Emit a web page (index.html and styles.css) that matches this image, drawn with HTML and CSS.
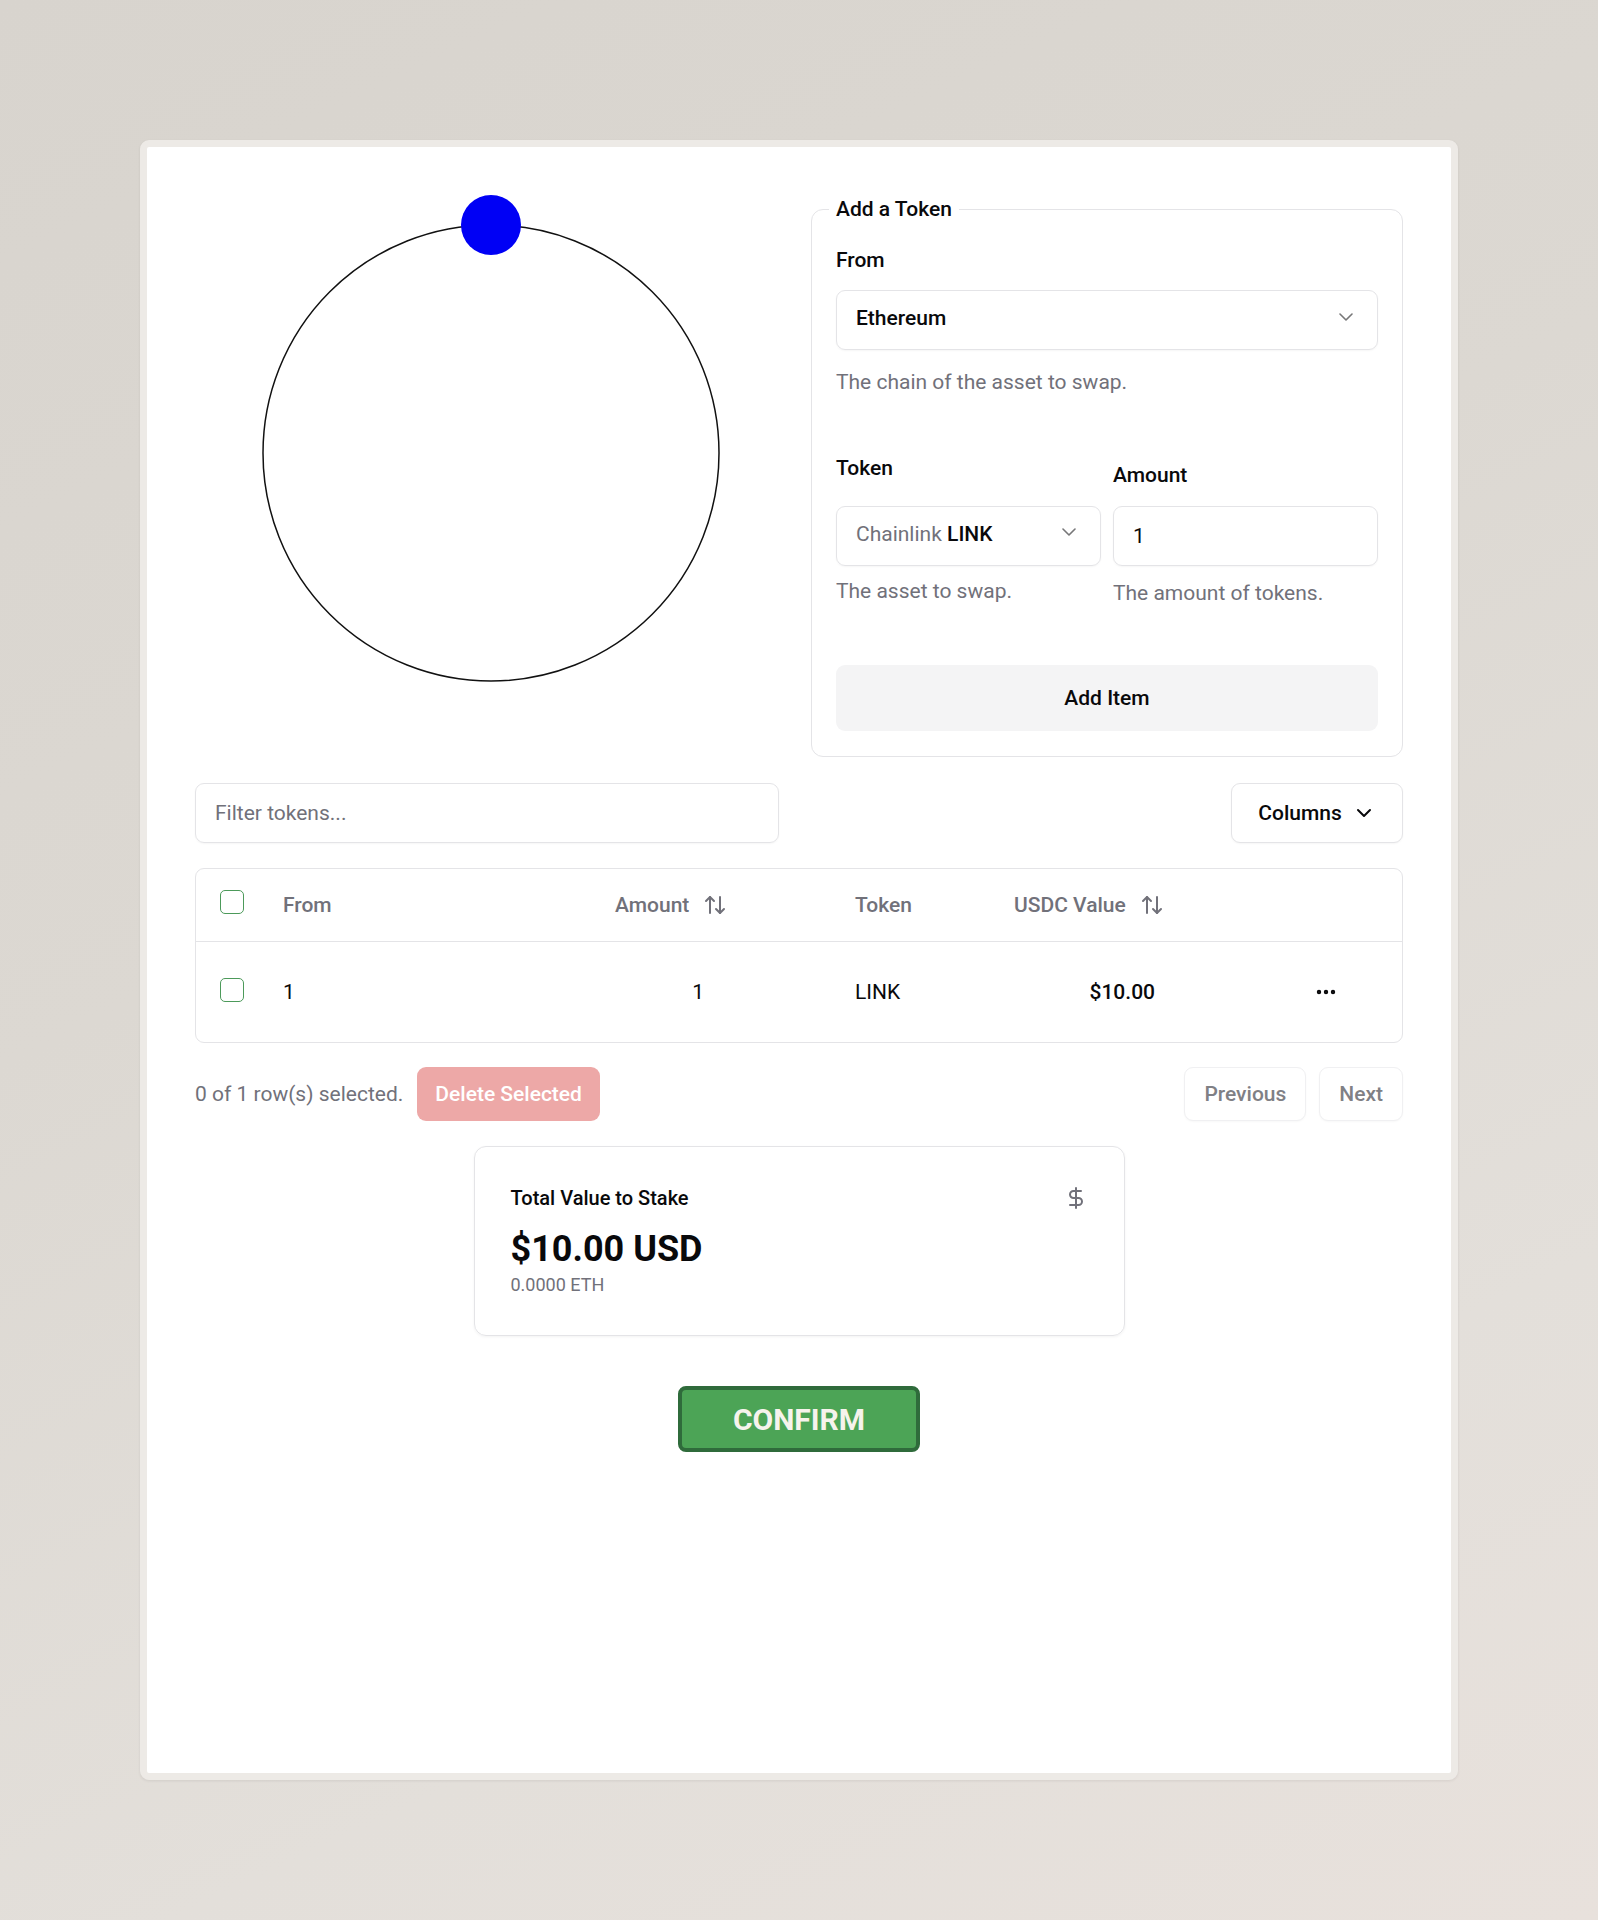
FILE: index.html
```html
<!DOCTYPE html>
<html lang="en">
<head>
<meta charset="utf-8">
<title>Add a Token</title>
<link rel="stylesheet" href="styles.css">
</head>
<body>
<main class="card">
  <section class="top">
    <div class="orbit">
      <svg width="592" height="500" viewBox="0 0 592 500">
        <circle cx="296" cy="258" r="228" fill="none" stroke="#111" stroke-width="1.5"/>
        <circle cx="296" cy="30" r="30" fill="#0000f5"/>
      </svg>
    </div>
    <fieldset class="token-form">
      <legend>Add a Token</legend>
      <label class="lbl lbl-from">From</label>
      <div class="select">
        <span class="select-value">Ethereum</span>
        <svg class="chev" width="24" height="24" viewBox="0 0 24 24" fill="none" stroke="currentColor" stroke-width="1.6" stroke-linecap="round" stroke-linejoin="round"><path d="m6 9 6 6 6-6"/></svg>
      </div>
      <p class="desc desc-from">The chain of the asset to swap.</p>
      <div class="pair">
        <div class="field">
          <label class="lbl lbl-token">Token</label>
          <div class="select">
            <span class="select-value"><span class="soft">Chainlink</span> <span class="strong">LINK</span></span>
            <svg class="chev chev-sm" width="24" height="24" viewBox="0 0 24 24" fill="none" stroke="currentColor" stroke-width="1.6" stroke-linecap="round" stroke-linejoin="round"><path d="m6 9 6 6 6-6"/></svg>
          </div>
          <p class="desc desc-pair">The asset to swap.</p>
        </div>
        <div class="field">
          <label class="lbl lbl-amount">Amount</label>
          <div class="input">1</div>
          <p class="desc desc-pair desc-amount">The amount of tokens.</p>
        </div>
      </div>
      <button class="btn-add" type="button">Add Item</button>
    </fieldset>
  </section>

  <section class="toolbar">
    <div class="filter">Filter tokens...</div>
    <button class="btn-columns" type="button">Columns
      <svg width="24" height="24" viewBox="0 0 24 24" fill="none" stroke="currentColor" stroke-width="2" stroke-linecap="round" stroke-linejoin="round"><path d="m6 9 6 6 6-6"/></svg>
    </button>
  </section>

  <section class="table">
    <div class="tr thead">
      <div class="td td-check"><span class="check check-head"></span></div>
      <div class="td th">From</div>
      <div class="td th"><span class="sort">Amount
        <svg width="24" height="24" viewBox="0 0 24 24" fill="none" stroke="currentColor" stroke-width="2" stroke-linecap="round" stroke-linejoin="round"><path d="m21 16-4 4-4-4"/><path d="M17 20V4"/><path d="m3 8 4-4 4 4"/><path d="M7 4v16"/></svg></span></div>
      <div class="td th">Token</div>
      <div class="td th"><span class="sort">USDC Value
        <svg width="24" height="24" viewBox="0 0 24 24" fill="none" stroke="currentColor" stroke-width="2" stroke-linecap="round" stroke-linejoin="round"><path d="m21 16-4 4-4-4"/><path d="M17 20V4"/><path d="m3 8 4-4 4 4"/><path d="M7 4v16"/></svg></span></div>
      <div class="td"></div>
    </div>
    <div class="tr tbody">
      <div class="td td-check"><span class="check check-row"></span></div>
      <div class="td">1</div>
      <div class="td"><span class="num num-amount">1</span></div>
      <div class="td">LINK</div>
      <div class="td"><span class="num num-usd">$10.00</span></div>
      <div class="td td-actions">
        <span class="more">
          <svg width="24" height="24" viewBox="0 0 24 24" fill="none" stroke="currentColor" stroke-width="2.4" stroke-linecap="round" stroke-linejoin="round"><circle cx="12" cy="12" r="1"/><circle cx="19" cy="12" r="1"/><circle cx="5" cy="12" r="1"/></svg>
        </span>
      </div>
    </div>
  </section>

  <section class="footer">
    <span class="selected">0 of 1 row(s) selected.</span>
    <button class="btn-delete" type="button">Delete Selected</button>
    <span class="spacer"></span>
    <button class="btn-page" type="button">Previous</button>
    <button class="btn-page" type="button">Next</button>
  </section>

  <section class="summary">
    <div class="summary-head">
      <span class="summary-title">Total Value to Stake</span>
      <svg class="dollar" width="24" height="24" viewBox="0 0 24 24" fill="none" stroke="currentColor" stroke-width="2" stroke-linecap="round" stroke-linejoin="round"><line x1="12" x2="12" y1="2" y2="22"/><path d="M17 5H9.5a3.5 3.5 0 0 0 0 7h5a3.5 3.5 0 0 1 0 7H6"/></svg>
    </div>
    <div class="summary-value">$10.00 USD</div>
    <div class="summary-sub">0.0000 ETH</div>
  </section>

  <button class="btn-confirm" type="button">CONFIRM</button>
</main>
</body>
</html>
```

FILE: styles.css
```css
* { box-sizing: border-box; }

html, body { margin: 0; }

body {
  min-height: 100vh;
  padding: 140px;
  display: flex;
  flex-direction: column;
  font-family: Roboto, "Liberation Sans", sans-serif;
  font-size: 21px;
  color: #09090b;
  background: linear-gradient(155deg, #d8d4ce 0%, #dcd8d2 40%, #e3dfda 75%, #e8e1dc 100%);
}

button {
  font-family: inherit;
  font-size: 21px;
  margin: 0;
  cursor: pointer;
}

.card {
  flex: 1;
  background: #fff;
  border: 7px solid #edeae6;
  border-radius: 9px;
  box-shadow: 0 1px 3px rgba(0, 0, 0, 0.08);
  padding: 48px;
  display: flex;
  flex-direction: column;
}

/* top row */
.top {
  display: grid;
  grid-template-columns: 1fr 1fr;
  gap: 24px;
  align-items: start;
}

.orbit svg { display: block; }

.token-form {
  margin: 0;
  min-width: 0;
  border: 1px solid #e4e4e7;
  border-radius: 12px;
  padding: 0 24px 25px;
}

.token-form legend {
  padding: 0 7px;
  margin-left: -7px;
  font-size: 21px;
  font-weight: 500;
  line-height: 28px;
}

.lbl {
  display: block;
  font-weight: 500;
  line-height: 30px;
}

.lbl-from { margin-top: 22px; margin-bottom: 15px; }
.lbl-token { margin-bottom: 23px; }
.lbl-amount { margin-top: 7px; margin-bottom: 16px; }

.select,
.input {
  height: 60px;
  border: 1px solid #e4e4e7;
  border-radius: 9px;
  box-shadow: 0 1px 2px rgba(0, 0, 0, 0.04);
  display: flex;
  align-items: center;
  justify-content: space-between;
  padding: 0 19px;
}

.select { padding-bottom: 4px; }

.select-value { font-weight: 500; }
.soft { color: #71717a; font-weight: 400; }
.strong { font-weight: 500; color: #09090b; }

.chev { color: #09090b; opacity: 0.55; margin-top: -2px; }
.chev-sm { margin-top: -5px; }

.input { justify-content: flex-start; }

.desc {
  margin: 0;
  color: #71717a;
  line-height: 30px;
}

.desc-from { margin-top: 17px; }
.desc-pair { margin-top: 10px; }
.desc-amount { margin-top: 12px; }

.pair {
  margin-top: 56px;
  display: grid;
  grid-template-columns: 1fr 1fr;
  gap: 12px;
}

.btn-add {
  display: block;
  width: 100%;
  height: 66px;
  margin-top: 57px;
  border: 0;
  border-radius: 9px;
  background: #f4f4f5;
  color: #09090b;
  font-weight: 500;
}

/* toolbar */
.toolbar {
  margin-top: 26px;
  display: flex;
  align-items: center;
  justify-content: space-between;
}

.filter {
  width: 584px;
  height: 60px;
  border: 1px solid #e4e4e7;
  border-radius: 9px;
  box-shadow: 0 1px 2px rgba(0, 0, 0, 0.04);
  padding: 0 19px;
  display: flex;
  align-items: center;
  color: #71717a;
}

.btn-columns {
  height: 60px;
  width: 172px;
  border: 1px solid #e4e4e7;
  border-radius: 9px;
  background: #fff;
  box-shadow: 0 1px 2px rgba(0, 0, 0, 0.04);
  color: #09090b;
  font-weight: 500;
  display: flex;
  align-items: center;
  justify-content: center;
  gap: 10px;
  padding: 0;
}

/* table */
.table {
  margin-top: 25px;
  border: 1px solid #e4e4e7;
  border-radius: 9px;
}

.tr {
  display: grid;
  grid-template-columns: 63px 332px 240px 159px 290px 1fr;
  align-items: center;
}

.thead {
  height: 73px;
  border-bottom: 1px solid #e4e4e7;
}

.tbody { height: 100px; }

.td {
  padding: 0 24px;
  display: flex;
  align-items: center;
}

.td-check { padding-right: 0; }

.th {
  color: #71717a;
  font-weight: 500;
}

.sort {
  display: inline-flex;
  align-items: center;
  gap: 14px;
}

.check {
  display: block;
  width: 24px;
  height: 24px;
  border: 1.5px solid #4c9a5a;
  border-radius: 5px;
}

.check-head { margin-top: -6px; }
.check-row { margin-top: -4px; }

.num { display: block; text-align: right; }
.num-amount { width: 89px; }
.num-usd { width: 141px; font-weight: 500; }

.td-actions { padding-left: 22px; }

.more {
  width: 48px;
  height: 48px;
  display: flex;
  align-items: center;
  justify-content: center;
  color: #09090b;
}

/* footer */
.footer {
  margin-top: 24px;
  display: flex;
  align-items: center;
  gap: 14px;
}

.selected { color: #71717a; }

.spacer { flex: 1; }

.btn-delete {
  height: 54px;
  padding: 0 18px;
  border: 0;
  border-radius: 9px;
  background: #eda8a7;
  color: #fff;
  font-weight: 500;
}

.btn-page {
  height: 54px;
  padding: 0 19px;
  border: 1px solid #f0f0f2;
  border-radius: 9px;
  background: #fff;
  color: #808085;
  font-weight: 500;
  box-shadow: 0 1px 2px rgba(0, 0, 0, 0.03);
}

.btn-page + .btn-page { margin-left: -1px; }

/* summary */
.summary {
  align-self: center;
  width: 651px;
  margin-top: 25px;
  border: 1px solid #e4e4e7;
  border-radius: 12px;
  box-shadow: 0 1px 3px rgba(0, 0, 0, 0.05);
  padding: 36px 36px 38px;
}

.summary-head {
  display: flex;
  align-items: center;
  justify-content: space-between;
  height: 30px;
  margin-bottom: 12px;
}

.summary-title { font-weight: 500; font-size: 20px; }

.dollar { color: #71717a; }

.summary-value {
  font-size: 36px;
  font-weight: 700;
  line-height: 48px;
}

.summary-sub {
  font-size: 18px;
  line-height: 24px;
  color: #71717a;
}

/* confirm */
.btn-confirm {
  align-self: center;
  margin-top: 50px;
  width: 242px;
  height: 66px;
  border: 4px solid #2f6b3b;
  border-radius: 8px;
  background: #4ca456;
  color: #f6f3ec;
  font-size: 30px;
  font-weight: 700;
  padding: 0;
}
```
